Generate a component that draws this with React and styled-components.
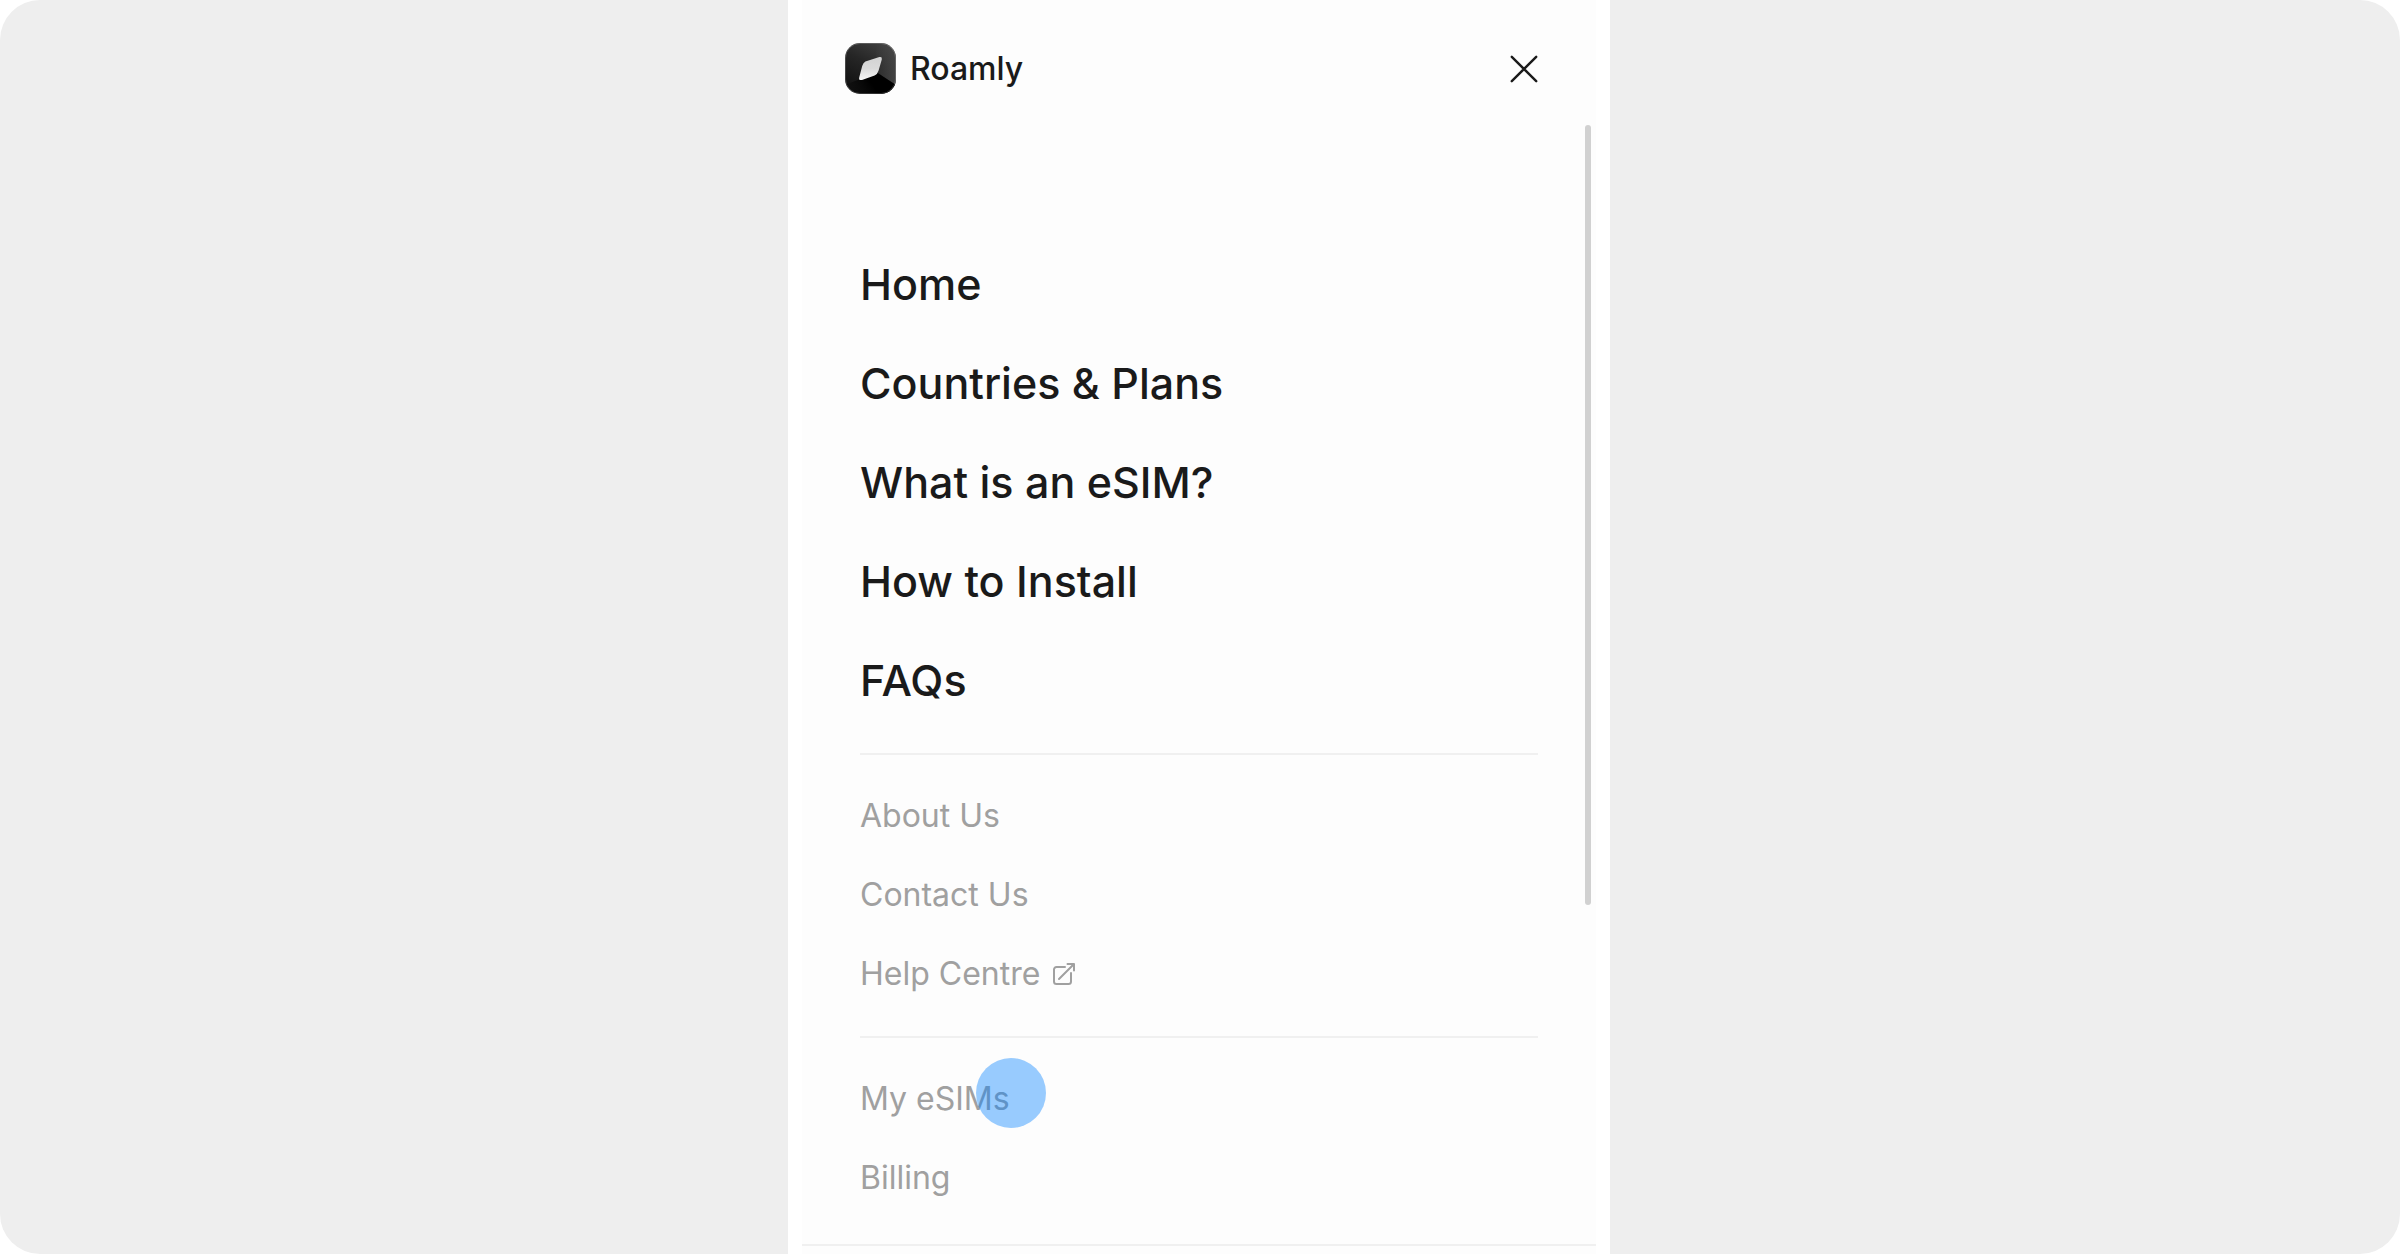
import React from "react";
import styled, { createGlobalStyle } from "styled-components";

const GlobalStyle = createGlobalStyle`
  *, *::before, *::after { box-sizing: border-box; }
  body {
    margin: 0;
    background: #ffffff;
    font-family: Inter, "Liberation Sans", sans-serif;
  }
`;

const Stage = styled.div`
  display: flex;
  justify-content: center;
  height: 100vh;
  padding-right: 2px;
  overflow: hidden;
  border-radius: 40px;
  background: #eeeeee;
`;

const Frame = styled.main`
  display: flex;
  width: 822px;
  max-width: 100%;
  padding: 0 14px;
  background: #ffffff;
`;

const Drawer = styled.div`
  display: flex;
  flex: 1;
  flex-direction: column;
  min-width: 0;
  background: #fdfdfd;
  color: #1a1a1a;
`;

const Header = styled.header`
  display: flex;
  align-items: center;
  justify-content: space-between;
  padding: 43px 43px 27px;
`;

const Brand = styled.a`
  display: flex;
  align-items: center;
  gap: 14px;
  color: inherit;
  font-size: 32px;
  font-weight: 500;
  line-height: 50px;
  text-decoration: none;
`;

const CloseButton = styled.button`
  display: grid;
  place-items: center;
  width: 58px;
  height: 50px;
  padding: 0;
  border: 0;
  background: none;
  color: inherit;
  cursor: pointer;
`;

const Body = styled.nav`
  position: relative;
  flex: 1;
  min-height: 0;
  padding: 114px 58px 0;
`;

const ScrollThumb = styled.div`
  position: absolute;
  top: 4px;
  right: 5px;
  width: 6px;
  height: 780px;
  border-radius: 3px;
  background: #d1d1d1;
`;

const Group = styled.ul`
  margin: 0;
  padding: 0;
  list-style: none;

  & + & {
    margin-top: 23px;
    padding-top: 21px;
    border-top: 2px solid #f0f0f0;
  }
`;

const Item = styled.li`
  position: relative;
  display: flex;
`;

const NavLink = styled.a`
  display: inline-flex;
  align-items: center;
  gap: 12px;
  color: ${(p) => (p.$primary ? "#1a1a1a" : "#a0a0a0")};
  font-size: ${(p) => (p.$primary ? "43px" : "32px")};
  font-weight: ${(p) => (p.$primary ? 500 : 400)};
  line-height: ${(p) => (p.$primary ? "99px" : "79px")};
  text-decoration: none;
  white-space: nowrap;
`;

const TapMarker = styled.span`
  position: absolute;
  top: -1px;
  left: 116px;
  width: 70px;
  height: 70px;
  border-radius: 50%;
  background: rgba(0, 128, 255, 0.4);
  pointer-events: none;
`;

const Footer = styled.footer`
  flex: none;
  height: 10px;
  border-top: 2px solid #f0f0f0;
`;

const Logo = () => (
  <svg width="51" height="51" viewBox="0 0 51 51" aria-hidden="true">
    <defs>
      <linearGradient id="tile" x1="0.8" y1="0" x2="0.3" y2="1">
        <stop offset="0" stopColor="#414141" />
        <stop offset="0.45" stopColor="#262626" />
        <stop offset="1" stopColor="#101010" />
      </linearGradient>
      <linearGradient id="flare" x1="0" y1="0" x2="1" y2="0.6">
        <stop offset="0" stopColor="#4c4c4c" stopOpacity="0" />
        <stop offset="1" stopColor="#4c4c4c" />
      </linearGradient>
      <linearGradient id="shade" x1="1" y1="0.3" x2="0" y2="0.6">
        <stop offset="0" stopColor="#000000" />
        <stop offset="0.5" stopColor="#000000" />
        <stop offset="1" stopColor="#000000" stopOpacity="0" />
      </linearGradient>
      <linearGradient id="leaf" x1="0" y1="0" x2="0" y2="1">
        <stop offset="0" stopColor="#d2d2d2" />
        <stop offset="0.5" stopColor="#dadada" />
        <stop offset="1" stopColor="#f6f6f6" />
      </linearGradient>
      <clipPath id="tileClip">
        <rect width="51" height="51" rx="15" />
      </clipPath>
    </defs>
    <g clipPath="url(#tileClip)">
      <rect width="51" height="51" fill="url(#tile)" />
      <path d="M31 0H51V42L31 29Z" fill="url(#flare)" opacity="0.7" />
      <path d="M15 36L32 29.5L51 42V51H0V42Z" fill="url(#shade)" />
    </g>
    <rect x="0.5" y="0.5" width="50" height="50" rx="14.5" fill="none" stroke="#ffffff" strokeOpacity="0.18" />
    <path
      d="M20.4 18.4L34.4 14.1Q37.4 13.5 36.8 16.4L33.6 27.400Q32.6 31 29.600 32.400L17 36.900Q13.500 37.800 14.200 34.400L17.200 23Q18.200 19.600 20.400 18.400Z"
      fill="url(#leaf)"
    />
  </svg>
);

const CloseIcon = () => (
  <svg width="28" height="28" viewBox="0 0 28 28" fill="none" stroke="currentColor" strokeWidth="2.4" strokeLinecap="round" aria-hidden="true">
    <path d="M1.8 1.8L26.2 26.2M26.2 1.8L1.8 26.2" />
  </svg>
);

const ExternalIcon = () => (
  <svg width="24" height="24" viewBox="0 0 24 24" fill="none" stroke="currentColor" strokeWidth="2" strokeLinecap="round" strokeLinejoin="round" aria-hidden="true">
    <path d="M13 5H4.5A2.5 2.5 0 0 0 2 7.500V19.500A2.500 2.500 0 0 0 4.500 22H16.500A2.500 2.500 0 0 0 19 19.500V11" />
    <path d="M7 17L22 2M15.500 2H22V8.500" />
  </svg>
);

const groups = [
  {
    primary: true,
    links: [
      { label: "Home" },
      { label: "Countries & Plans" },
      { label: "What is an eSIM?" },
      { label: "How to Install" },
      { label: "FAQs" },
    ],
  },
  {
    links: [
      { label: "About Us" },
      { label: "Contact Us" },
      { label: "Help Centre", external: true },
    ],
  },
  { links: [{ label: "My eSIMs", tapped: true }, { label: "Billing" }] },
];

export default function App() {
  return (
    <>
      <GlobalStyle />
      <Stage>
        <Frame>
          <Drawer>
            <Header>
              <Brand href="#">
                <Logo />
                Roamly
              </Brand>
              <CloseButton type="button" aria-label="Close menu">
                <CloseIcon />
              </CloseButton>
            </Header>
            <Body>
              {groups.map((group, index) => (
                <Group key={index}>
                  {group.links.map((link) => (
                    <Item key={link.label}>
                      <NavLink href="#" $primary={group.primary}>
                        {link.label}
                        {link.external && <ExternalIcon />}
                      </NavLink>
                      {link.tapped && <TapMarker />}
                    </Item>
                  ))}
                </Group>
              ))}
              <ScrollThumb />
            </Body>
            <Footer />
          </Drawer>
        </Frame>
      </Stage>
    </>
  );
}
